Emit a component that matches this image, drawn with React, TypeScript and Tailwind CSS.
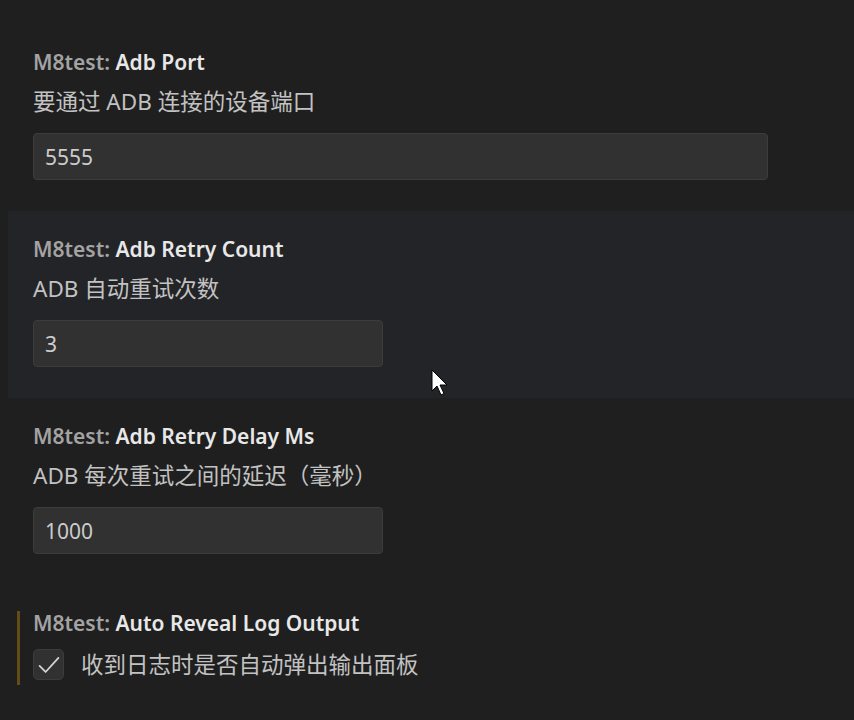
import React from 'react';

const font = { fontFamily: '"Noto Sans", "Noto Sans CJK SC", sans-serif' };

type Item = {
  name: string;
  desc: string;
  value?: string;
  wide?: boolean;
  hover?: boolean;
  checkbox?: boolean;
};

const items: Item[] = [
  { name: 'Adb Port', desc: '要通过 ADB 连接的设备端口', value: '5555', wide: true },
  { name: 'Adb Retry Count', desc: 'ADB 自动重试次数', value: '3', hover: true },
  { name: 'Adb Retry Delay Ms', desc: 'ADB 每次重试之间的延迟（毫秒）', value: '1000' },
  { name: 'Auto Reveal Log Output', desc: '收到日志时是否自动弹出输出面板', checkbox: true },
];

const Title = ({ name }: { name: string }) => (
  <div className="h-[28px] leading-[28px] text-[21px] font-semibold">
    <span className="text-[#a3a3a3]">M8test: </span>
    <span className="text-[#e8e8e8]">{name}</span>
  </div>
);

const Setting = ({ item }: { item: Item }) => {
  if (item.checkbox) {
    return (
      <div className="relative ml-[8px] pl-[25px] pt-[24px] h-[134px]">
        {/* modified indicator */}
        <div className="absolute left-[9px] top-[26px] w-[3px] h-[74px] bg-[#634d17]" />
        <Title name={item.name} />
        <div className="flex items-center gap-[17px] mt-[12px]">
          <div className="w-[31px] h-[31px] rounded-[5px] bg-[#313131] border border-[#3c3c3c] flex items-center justify-center">
            <svg width="26" height="26" viewBox="0 0 16 16" fill="none">
              <path d="M2.2 8.6 L5.9 12.3 L13.8 3.6" stroke="#d4d4d4" strokeWidth="1.1" strokeLinecap="round" strokeLinejoin="round" />
            </svg>
          </div>
          <div className="text-[22.5px] leading-[28px] text-[#c2c2c2]">{item.desc}</div>
        </div>
      </div>
    );
  }
  return (
    <div className={`ml-[8px] pl-[25px] pt-[24px] pb-[31px] ${item.hover ? 'bg-[#232427]' : ''}`}>
      <Title name={item.name} />
      <div className="mt-[12px] h-[28px] leading-[28px] text-[22.5px] text-[#c2c2c2]">{item.desc}</div>
      <div
        className={`mt-[17px] h-[47px] rounded-[4px] bg-[#313131] border border-[#3c3c3c] flex items-center pl-[11px] pt-[2px] text-[21px] text-[#cccccc] ${
          item.wide ? 'w-[735px]' : 'w-[350px]'
        }`}
      >
        {item.value}
      </div>
    </div>
  );
};

export default function App() {
  return (
    <div className="relative w-[854px] h-[720px] bg-[#1f1f1f] overflow-hidden pt-[24px]" style={font}>
      <div className="flex flex-col">
        {items.map((it) => (
          <Setting key={it.name} item={it} />
        ))}
      </div>
      {/* mouse pointer */}
      <svg className="absolute left-[431px] top-[369px]" width="20" height="30" viewBox="0 0 20 30">
        <path d="M1 1 L1 22 L6 17 L10 26 L13 24.5 L9 16 L16 16 Z" fill="#ffffff" stroke="#000000" strokeWidth="1" strokeLinejoin="round" />
      </svg>
    </div>
  );
}
